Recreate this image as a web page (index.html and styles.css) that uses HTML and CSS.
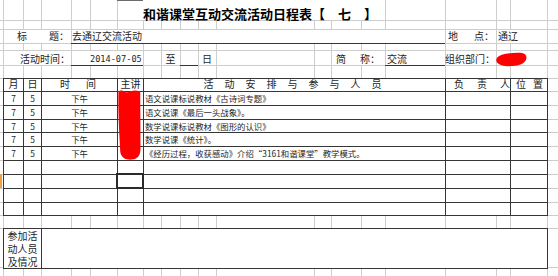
FILE: index.html
```html
<!DOCTYPE html>
<html lang="zh-CN">
<head>
<meta charset="utf-8">
<title>和谐课堂互动交流活动日程表</title>
<link rel="stylesheet" href="styles.css">
</head>
<body>
<div class="sheet">
  <div class="top">
    <div class="colmark"></div>
    <div class="title">和谐课堂互动交流活动日程表【　七　】</div>
    <div class="cell w lbl-title">标<span class="g-title">题：</span></div>
    <div class="cell w ul val-title">去通辽交流活动</div>
    <div class="cell lbl-place">地<span class="g-place">点：</span></div>
    <div class="cell w val-place">通辽</div>
    <div class="cell w r5 lbl-time">活动时间：</div>
    <div class="cell w ul r5 val-date">2014-07-05</div>
    <div class="cell r5 ctr to">至</div>
    <div class="cell ul r5 blank"></div>
    <div class="cell r5 ctr day">日</div>
    <div class="cell w r5 lbl-abbr">简<span class="g-abbr">称：</span></div>
    <div class="cell w ul r5 val-abbr">交流</div>
    <div class="cell r5 lbl-org">组织部门：</div>
    <div class="val-org">
      <svg width="32" height="16" viewBox="0 0 32 16"><path d="M0.3 8.5 C1 5.2 6 3.4 12 2.6 C18 1.8 26 1.2 29.2 3.4 C31.4 5.4 30.6 9.8 27.4 12 C23.4 14.6 15.4 15.6 9.2 15 C4 14.4 -0.2 12.2 0.3 8.5 Z" fill="#ff0000"/></svg>
    </div>
  </div>

  <div class="tbl">
    <svg class="redact" width="548" height="138" viewBox="0 0 548 138"><path d="M118.4 14 C119 12.4 121 12 123 12.8 C125 14.6 128 14.8 130.5 13.2 C133.5 12.2 137.5 12.3 140.2 13.5 L140.5 70 C140.6 77 138 81.2 132 81.6 C126 82 121.2 80 120.3 74 C119.6 60 118 38 118.4 14 Z" fill="#ff0000"/></svg>

    <div class="tr hd">
      <div class="stub"></div>
      <div class="c ctr">月</div>
      <div class="c ctr">日</div>
      <div class="c h-time"><span>时</span><span>间</span></div>
      <div class="c ctr h-lead">主讲</div>
      <div class="c h-act"><span>活</span><span>动</span><span>安</span><span>排</span><span>与</span><span>参</span><span>与</span><span>人</span><span>员</span></div>
      <div class="c h-who"><span>负</span><span>责</span><span>人</span></div>
      <div class="c h-pos end"><span>位</span><span>置</span></div>
    </div>

    <div class="tr">
      <div class="stub"></div>
      <div class="c ctr">7</div><div class="c ctr">5</div><div class="c ctr">下午</div><div class="c"></div>
      <div class="c act">语文说课标说教材《古诗词专题》</div>
      <div class="c"></div><div class="c end"></div>
    </div>
    <div class="tr">
      <div class="stub"></div>
      <div class="c ctr">7</div><div class="c ctr">5</div><div class="c ctr">下午</div><div class="c"></div>
      <div class="c act">语文说课《最后一头战象》。</div>
      <div class="c"></div><div class="c end"></div>
    </div>
    <div class="tr">
      <div class="stub"></div>
      <div class="c ctr">7</div><div class="c ctr">5</div><div class="c ctr">下午</div><div class="c"></div>
      <div class="c act">数学说课标说教材《图形的认识》</div>
      <div class="c"></div><div class="c end"></div>
    </div>
    <div class="tr">
      <div class="stub"></div>
      <div class="c ctr">7</div><div class="c ctr">5</div><div class="c ctr">下午</div><div class="c"></div>
      <div class="c act">数学说课《统计》。</div>
      <div class="c"></div><div class="c end"></div>
    </div>
    <div class="tr">
      <div class="stub"></div>
      <div class="c ctr">7</div><div class="c ctr">5</div><div class="c ctr">下午</div><div class="c"></div>
      <div class="c act">《经历过程，收获感动》介绍“3161和谐课堂”教学模式。</div>
      <div class="c"></div><div class="c end"></div>
    </div>
    <div class="tr">
      <div class="stub"></div>
      <div class="c"></div><div class="c"></div><div class="c"></div><div class="c"></div>
      <div class="c"></div><div class="c"></div><div class="c end"></div>
    </div>
    <div class="tr sel">
      <div class="stub"></div>
      <div class="c"></div><div class="c"></div><div class="c"></div><div class="c cur"></div>
      <div class="c"></div><div class="c"></div><div class="c end"></div>
    </div>
    <div class="tr">
      <div class="stub"></div>
      <div class="c"></div><div class="c"></div><div class="c"></div><div class="c"></div>
      <div class="c"></div><div class="c"></div><div class="c end"></div>
    </div>
    <div class="tr last">
      <div class="stub"></div>
      <div class="c"></div><div class="c"></div><div class="c"></div><div class="c"></div>
      <div class="c"></div><div class="c"></div><div class="c end"></div>
    </div>
  </div>

  <div class="spacer"></div>

  <div class="join">
    <div class="stub"></div>
    <div class="join-lbl">参加活动人员及情况</div>
    <div class="join-val"></div>
  </div>
</div>
</body>
</html>
```

FILE: styles.css
```css
html, body {
  margin: 0;
  padding: 0;
  background: #fff;
}

body {
  font-family: "Noto Sans CJK SC", "Noto Sans", sans-serif;
  color: #1e1e1e;
  width: 558px;
  height: 276px;
  overflow: hidden;
}

.sheet {
  --g: linear-gradient(#cdcdcd, #cdcdcd);
  --dk: #363636;
  position: relative;
  z-index: 0;
  width: 558px;
  height: 276px;
  overflow: hidden;
  display: flex;
  flex-direction: column;
  background-color: #fff;
  background-image: var(--g), var(--g), var(--g), var(--g), var(--g), var(--g), var(--g), var(--g), var(--g), var(--g),
                    var(--g), var(--g), var(--g), var(--g), var(--g), var(--g), var(--g), var(--g), var(--g);
  background-size: 1px 100%;
  background-repeat: no-repeat;
  background-position: 3px 0, 23px 0, 41px 0, 71px 0, 90px 0, 117px 0, 143px 0, 161px 0, 180px 0, 198px 0,
                       216px 0, 314px 0, 331px 0, 361px 0, 385px 0, 445px 0, 496px 0, 510px 0, 547px 0;
}

.sheet::before {
  content: "";
  position: absolute;
  inset: 0;
  z-index: -1;
  background-image: var(--g), var(--g), var(--g), var(--g), var(--g), var(--g), var(--g), var(--g), var(--g),
                    var(--g), var(--g), var(--g), var(--g), var(--g), var(--g), var(--g), var(--g), var(--g);
  background-size: 100% 1px;
  background-repeat: no-repeat;
  background-position: 0 20px, 0 29px, 0 43px, 0 50px, 0 65px, 0 78px, 0 91px, 0 105px, 0 119px,
                       0 132px, 0 146px, 0 160px, 0 174px, 0 188px, 0 202px, 0 215px, 0 228px, 0 267px;
}

/* ---------- header area ---------- */
.top {
  display: grid;
  grid-template-columns: 3px 20px 18px 30px 19px 27px 26px 18px 19px 18px 18px 98px 17px 30px 24px 60px 51px 14px 37px 11px;
  grid-template-rows: 20px 9px 14px 7px 15px 13px;
  flex: none;
}

.colmark {
  grid-column: 7;
  grid-row: 1;
  border-top: 1px solid #6a6a6a;
}

.title {
  grid-column: 8 / 16;
  grid-row: 1;
  background: #fff;
  display: flex;
  align-items: flex-end;
  font-size: 13px;
  line-height: 13px;
  font-weight: bold;
  color: #000;
  white-space: nowrap;
}

.cell {
  display: flex;
  align-items: center;
  font-size: 10px;
  line-height: 10px;
  white-space: nowrap;
  box-sizing: border-box;
}

.ctr { justify-content: center; }

.w {
  background: linear-gradient(#fff, #fff) 1px 1px / calc(100% - 1px) calc(100% - 1px) no-repeat;
}

.ul {
  border-bottom: 1px solid var(--dk);
  margin-bottom: -1px;
}

.r5 {
  grid-row: 5;
  padding-top: 3px;
}

.lbl-title { grid-column: 2 / 5; grid-row: 3; padding-left: 14px; }
.g-title { margin-left: 22px; }
.val-title { grid-column: 5 / 17; grid-row: 3; padding-left: 1px; }
.lbl-place { grid-column: 17 / 18; grid-row: 3; padding-left: 3px; }
.g-place { margin-left: 16px; }
.val-place { grid-column: 18 / 20; grid-row: 3; padding-left: 2px; }

.lbl-time { grid-column: 2 / 5; padding-left: 17px; }
.val-date {
  grid-column: 5 / 8;
  padding-left: 19px;
  font-family: "DejaVu Sans Mono", "Liberation Mono", monospace;
  font-size: 8.6px;
}
.to { grid-column: 9; }
.blank { grid-column: 10; }
.day { grid-column: 11; }
.lbl-abbr { grid-column: 14 / 16; padding-left: 5px; }
.g-abbr { margin-left: 14px; }
.val-abbr { grid-column: 16; padding-left: 2px; }
.lbl-org { grid-column: 17 / 18; padding-left: 0; }
.val-org {
  grid-column: 18 / 20;
  grid-row: 5;
  align-self: start;
  height: 15px;
  padding-top: 1px;
}
.val-org svg { display: block; overflow: visible; }

/* ---------- schedule table ---------- */
.tbl {
  position: relative;
  display: grid;
  grid-template-columns: 3px 20px 18px 76px 26px 302px 65px 38px;
  grid-template-rows: 13px 14px 14px 13px 14px 14px 14px 14px 14px 14px;
  width: 548px;
  flex: none;
}

.tr { display: contents; }

.stub { background: transparent; }
.sel .stub { box-shadow: inset 2px 0 #f3a03c; }

.c {
  box-sizing: border-box;
  border-left: 1px solid var(--dk);
  border-top: 1px solid var(--dk);
  background: #fff;
  display: flex;
  align-items: center;
  font-size: 8.4px;
  line-height: 9px;
  white-space: nowrap;
  overflow: visible;
}

.c.end { border-right: 1px solid var(--dk); }
.last .c { border-bottom: 1px solid var(--dk); }

.hd .c {
  font-size: 10px;
  line-height: 10px;
  padding-bottom: 2px;
}

.h-time { padding-left: 18px; gap: 16px; }
.h-act { justify-content: center; gap: 11px; padding-right: 4px; }
.h-who { padding-left: 8px; gap: 13px; }
.h-pos { padding-left: 5px; gap: 7px; }

.act { padding-left: 1px; }

.cur {
  position: relative;
  z-index: 2;
  outline: 2px solid #2a2a2a;
  outline-offset: -1px;
}

.redact {
  position: absolute;
  left: 0;
  top: 0;
  z-index: 3;
  pointer-events: none;
}

/* ---------- participants ---------- */
.spacer {
  height: 12px;
  flex: none;
}

.join {
  display: grid;
  grid-template-columns: 3px 38px 507px;
  height: 40px;
  flex: none;
}

.join-lbl {
  box-sizing: border-box;
  border-left: 1px solid var(--dk);
  border-top: 1px solid var(--dk);
  border-bottom: 1px solid var(--dk);
  background: #fff;
  display: flex;
  align-items: center;
  justify-content: center;
  text-align: center;
  font-size: 10px;
  line-height: 13px;
  padding: 0 2px;
}

.join-val {
  box-sizing: border-box;
  border: 1px solid var(--dk);
  background: #fff;
}
```
